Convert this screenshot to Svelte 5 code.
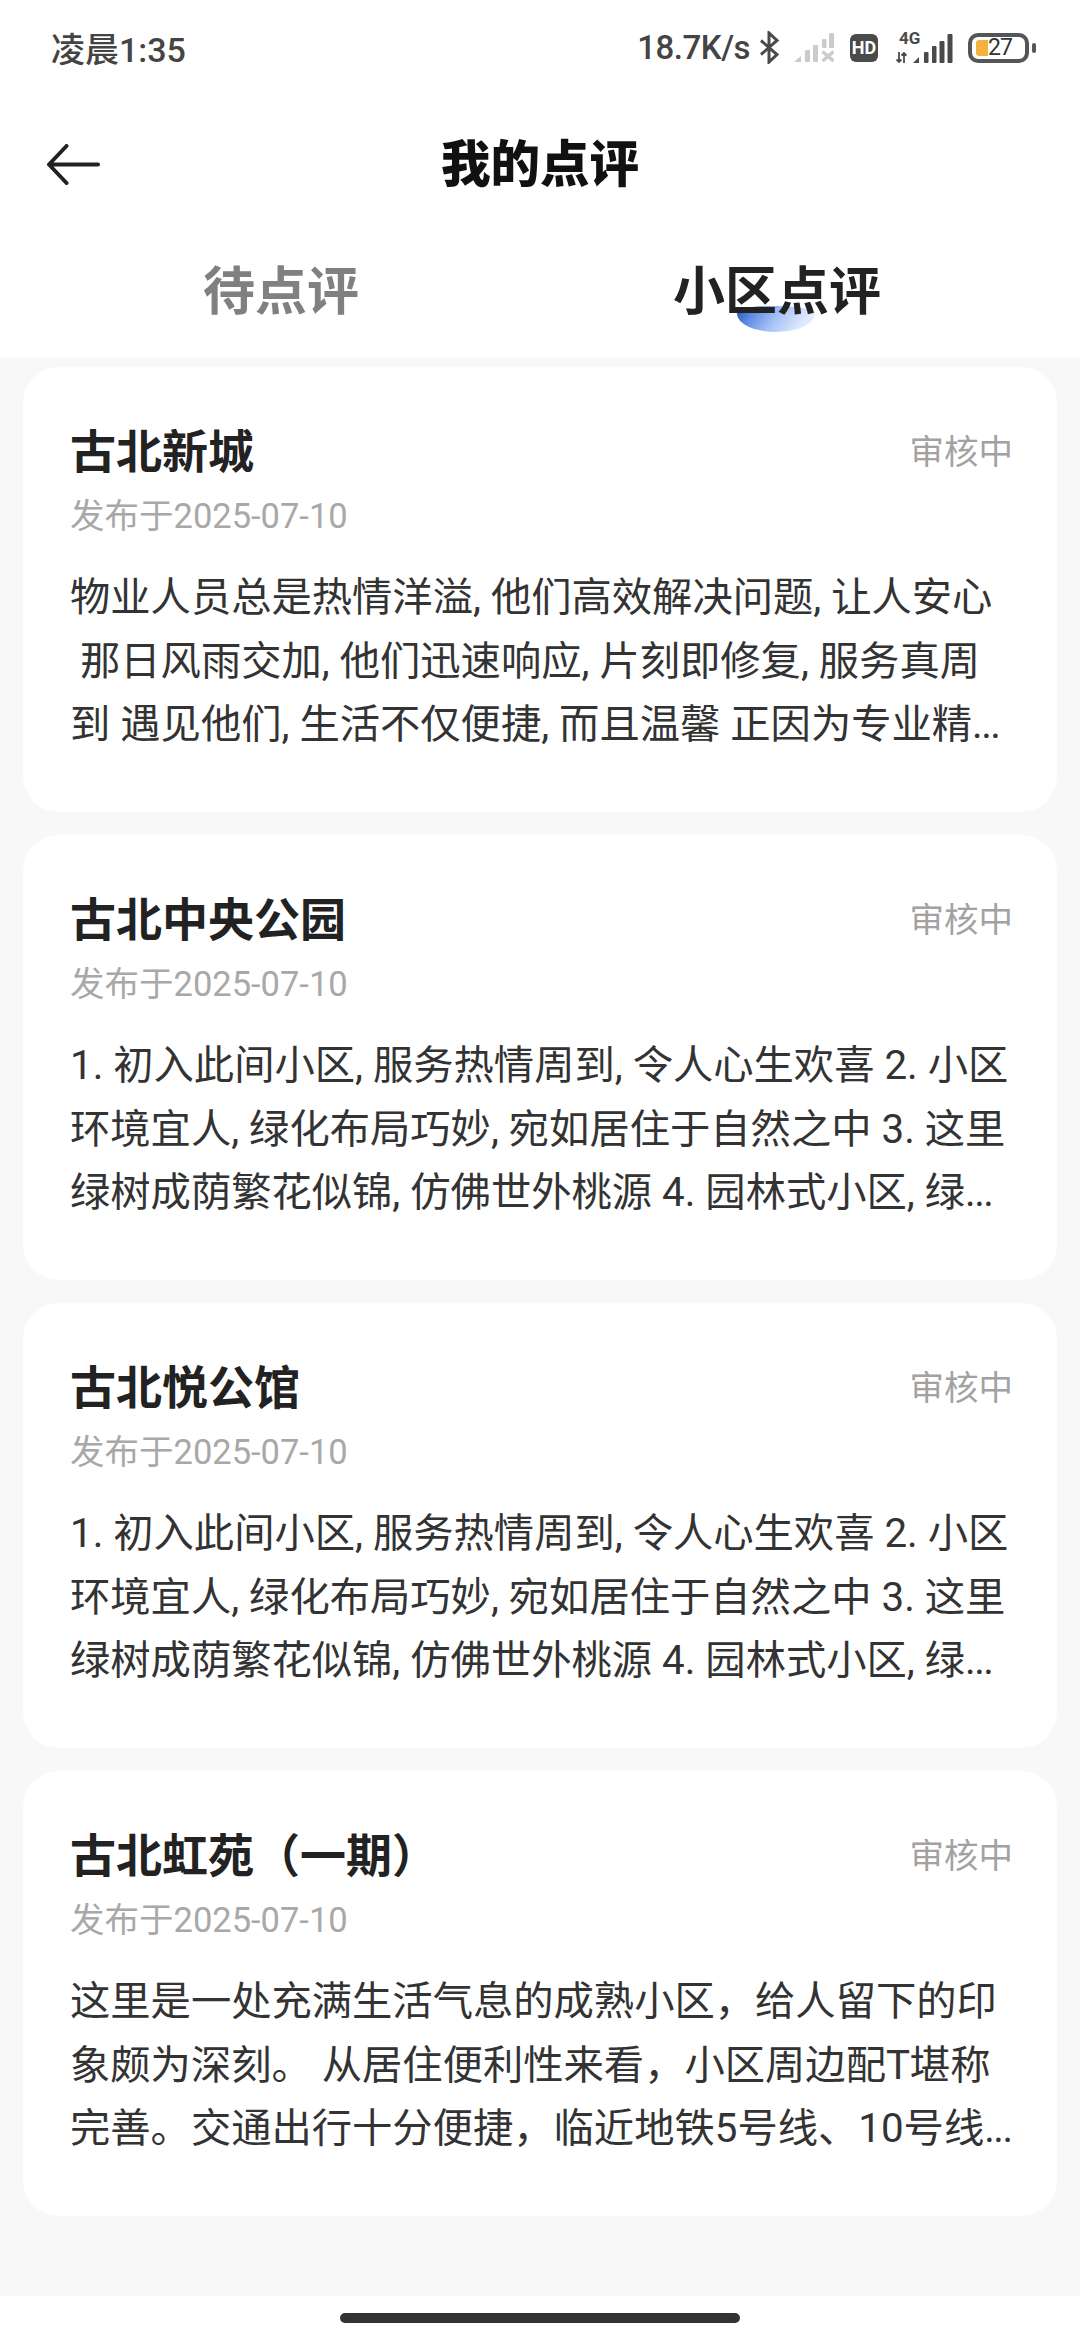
<script lang="ts">
  type Review = { name: string; date: string; status: string; lines: string[] };

  const templateLines = [
    '1. 初入此间小区, 服务热情周到, 令人心生欢喜 2. 小区',
    '环境宜人, 绿化布局巧妙, 宛如居住于自然之中 3. 这里',
    '绿树成荫繁花似锦, 仿佛世外桃源 4. 园林式小区, 绿...'
  ];

  const reviews: Review[] = [
    {
      name: '古北新城',
      date: '发布于2025-07-10',
      status: '审核中',
      lines: [
        '物业人员总是热情洋溢, 他们高效解决问题, 让人安心',
        ' 那日风雨交加, 他们迅速响应, 片刻即修复, 服务真周',
        '到 遇见他们, 生活不仅便捷, 而且温馨 正因为专业精...'
      ]
    },
    { name: '古北中央公园', date: '发布于2025-07-10', status: '审核中', lines: templateLines },
    { name: '古北悦公馆', date: '发布于2025-07-10', status: '审核中', lines: templateLines },
    {
      name: '古北虹苑（一期）',
      date: '发布于2025-07-10',
      status: '审核中',
      lines: [
        '这里是一处充满生活气息的成熟小区，给人留下的印',
        '象颇为深刻。 从居住便利性来看，小区周边配T堪称',
        '完善。交通出行十分便捷，临近地铁5号线、10号线...'
      ]
    }
  ];
</script>

<div class="page">
  <header class="header">
    <div class="statusbar">
      <span class="time">凌晨1:35</span>
      <div class="status-right">
        <span class="speed">18.7K/s</span>
        <svg class="bt" width="21" height="33" viewBox="0 0 21 33" fill="none" stroke="#4a4a4a" stroke-width="3">
          <path d="M2 9.5 18 23.5 10 31V2l8 7.5L2 23.5" />
        </svg>
        <svg class="sig-off" width="40" height="29" viewBox="0 0 40 29" fill="#cbcbcb">
          <path d="M0 29 7 23v6z" />
          <rect x="11" y="17" width="5" height="12" rx="1" />
          <rect x="19" y="12" width="5" height="17" rx="1" />
          <rect x="28" y="6" width="4.5" height="9" rx="1" />
          <rect x="35" y="0" width="5" height="15" rx="1" />
          <path d="M28.5 18.5l11 9.5M39.5 18.5l-11 9.5" stroke="#cbcbcb" stroke-width="3.5" />
        </svg>
        <span class="hd">HD</span>
        <div class="net">
          <span class="net-label">4G</span>
          <svg class="net-arrows" width="11" height="11" viewBox="0 0 11 11" fill="none" stroke="#4a4a4a" stroke-width="1.8">
            <path d="M3 0v10M0.5 7.5 3 10l2.5-2.5M8 11V1M5.5 3.5 8 1l2.5 2.5" />
          </svg>
          <svg class="net-bars" width="40" height="29" viewBox="0 0 40 29" fill="#4a4a4a">
            <path d="M0 29 6 23v6z" />
            <rect x="11" y="18" width="4.5" height="11" rx="1" />
            <rect x="19" y="12" width="4.5" height="17" rx="1" />
            <rect x="26.5" y="7" width="5" height="22" rx="1" />
            <rect x="34.5" y="0" width="5" height="29" rx="1" />
          </svg>
        </div>
        <div class="battery">
          <div class="battery-body">
            <span class="battery-fill"></span>
            <span class="battery-num">27</span>
          </div>
          <span class="battery-nub"></span>
        </div>
      </div>
    </div>

    <nav class="navbar">
      <svg class="back" width="53" height="41" viewBox="0 0 53 41" fill="none" stroke="#222" stroke-width="4" stroke-linecap="round" stroke-linejoin="round">
        <path d="M51 20.5H2M19.5 2 2 20.5 19.5 39" />
      </svg>
      <h1>我的点评</h1>
    </nav>

    <div class="tabs">
      <span class="tab">待点评</span>
      <span class="tab active">
        <span class="tab-mark"></span>
        <span class="tab-text">小区点评</span>
      </span>
    </div>
  </header>

  <main class="list">
    {#each reviews as review}
      <article class="card">
        <div class="card-head">
          <h2>{review.name}</h2>
          <span class="state">{review.status}</span>
        </div>
        <div class="date">{review.date}</div>
        <p class="body">
          {#each review.lines as line}
            {#if line.endsWith('...')}
              <span class="line">{line.slice(0, -3)}<span class="dots">...</span></span>
            {:else}
              <span class="line">{line}</span>
            {/if}
          {/each}
        </p>
      </article>
    {/each}
  </main>

  <footer class="homebar">
    <span class="home-pill"></span>
  </footer>
</div>

<style>
  :global(body) {
    margin: 0;
    background: #fff;
  }

  .page {
    width: 1080px;
    height: 2340px;
    display: flex;
    flex-direction: column;
    background: #fff;
    overflow: hidden;
    font-family: 'Roboto', 'Noto Sans CJK SC', sans-serif;
  }

  .header {
    height: 357px;
    flex: none;
    background: #fff;
  }

  .statusbar {
    box-sizing: border-box;
    height: 98px;
    display: flex;
    align-items: center;
    justify-content: space-between;
    padding: 0 44px 3px 51px;
    color: #444;
  }

  .time {
    font-size: 34px;
    font-weight: 500;
  }

  .status-right {
    display: flex;
    align-items: center;
  }

  .speed {
    font-size: 33px;
    font-weight: 500;
    letter-spacing: -0.5px;
  }

  .bt {
    margin-left: 9px;
  }

  .sig-off {
    margin-left: 14px;
  }

  .hd {
    margin-left: 16px;
    width: 28px;
    height: 28px;
    border-radius: 6px;
    background: #4a4a4a;
    color: #fff;
    font-size: 18px;
    font-weight: 700;
    line-height: 28px;
    text-align: center;
  }

  .net {
    position: relative;
    width: 57px;
    height: 30px;
    margin-left: 18px;
  }

  .net-label {
    position: absolute;
    left: 3px;
    top: -3px;
    font-size: 17px;
    font-weight: 700;
    line-height: 17px;
    color: #4a4a4a;
  }

  .net-arrows {
    position: absolute;
    left: 0;
    bottom: 0;
  }

  .net-bars {
    position: absolute;
    right: 0;
    bottom: 0;
  }

  .battery {
    display: flex;
    align-items: center;
    gap: 3px;
    margin-left: 15px;
  }

  .battery-body {
    box-sizing: border-box;
    width: 61px;
    height: 30px;
    border: 4px solid #555;
    border-radius: 10px;
    display: flex;
    align-items: center;
    padding-left: 4px;
  }

  .battery-fill {
    width: 12px;
    height: 16px;
    background: #f5b13d;
    border-radius: 3px 0 0 3px;
  }

  .battery-num {
    font-size: 23px;
    line-height: 22px;
    letter-spacing: -1px;
    color: #333;
  }

  .battery-nub {
    width: 4px;
    height: 10px;
    background: #555;
    border-radius: 2px;
  }

  .navbar {
    box-sizing: border-box;
    height: 132px;
    position: relative;
    display: flex;
    align-items: center;
    justify-content: center;
    padding-bottom: 8px;
  }

  .back {
    position: absolute;
    left: 47px;
    top: 46px;
  }

  h1 {
    margin: 0;
    font-size: 49.5px;
    font-weight: 900;
    color: #111;
  }

  .tabs {
    display: flex;
    justify-content: space-between;
    padding: 3px 199px 0 203px;
  }

  .tab {
    position: relative;
    font-size: 52px;
    font-weight: 700;
    line-height: 120px;
    color: #808080;
  }

  .tab.active {
    color: #222;
  }

  .tab-mark {
    position: absolute;
    left: 64px;
    top: 73px;
    width: 78px;
    height: 26px;
    border-radius: 40% 50% 50% 50% / 30% 30% 70% 70%;
    background: linear-gradient(125deg, #1e4fb4 0%, #5a87e4 20%, #a9c3f7 50%, #dce8fc 80%, #f4f8ff 100%);
  }

  .tab-text {
    position: relative;
  }

  .list {
    flex: 1;
    display: flex;
    flex-direction: column;
    gap: 23px;
    padding: 10px 23px 0;
    background: #f8f8f8;
  }

  .card {
    box-sizing: border-box;
    height: 445px;
    padding: 45px 44px 0 47px;
    background: #fff;
    border-radius: 36px;
  }

  .card-head {
    display: flex;
    align-items: center;
    justify-content: space-between;
    height: 72px;
  }

  h2 {
    margin: 0;
    font-size: 46px;
    font-weight: 700;
    color: #222;
  }

  .state {
    margin-top: 2px;
    font-size: 34.5px;
    color: #a2a2a2;
  }

  .date {
    margin-top: 10px;
    font-size: 34.5px;
    line-height: 44px;
    color: #a8a8a8;
  }

  .body {
    margin: 28px 0 0;
    font-size: 40.3px;
    line-height: 63.5px;
    color: #333;
  }

  .line {
    display: block;
    white-space: pre;
  }

  .dots {
    letter-spacing: -1.5px;
  }

  .homebar {
    box-sizing: border-box;
    height: 44px;
    flex: none;
    display: flex;
    justify-content: center;
    padding-top: 17px;
    background: #fff;
  }

  .home-pill {
    width: 400px;
    height: 10px;
    border-radius: 5px;
    background: #333;
  }
</style>
